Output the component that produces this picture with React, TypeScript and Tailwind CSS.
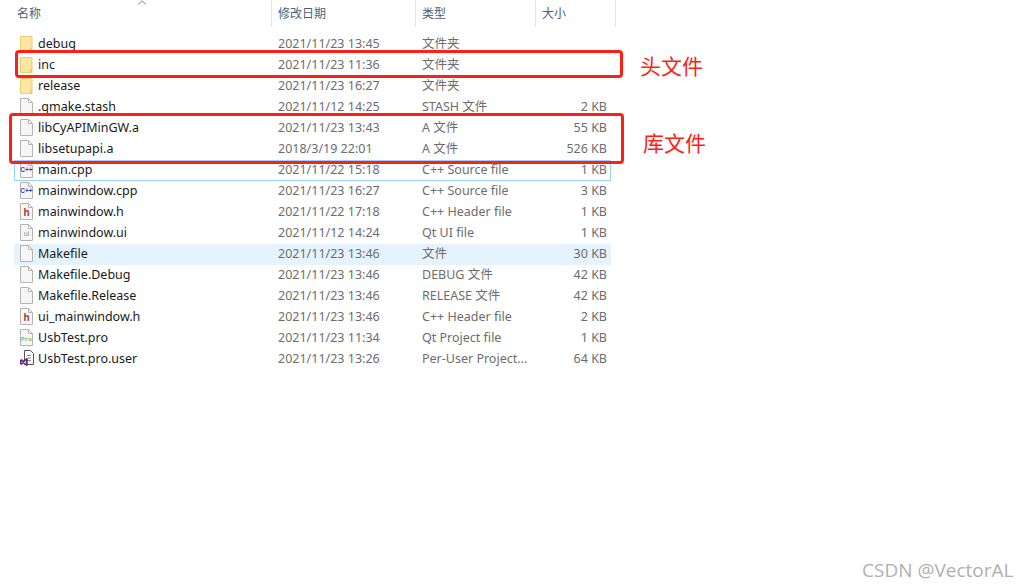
const files = [
  { name: 'debug', date: '2021/11/23 13:45', type: '文件夹', size: '', icon: 'folder' },
  { name: 'inc', date: '2021/11/23 11:36', type: '文件夹', size: '', icon: 'folder' },
  { name: 'release', date: '2021/11/23 16:27', type: '文件夹', size: '', icon: 'folder' },
  { name: '.qmake.stash', date: '2021/11/12 14:25', type: 'STASH 文件', size: '2 KB', icon: 'doc' },
  { name: 'libCyAPIMinGW.a', date: '2021/11/23 13:43', type: 'A 文件', size: '55 KB', icon: 'doc' },
  { name: 'libsetupapi.a', date: '2018/3/19 22:01', type: 'A 文件', size: '526 KB', icon: 'doc' },
  { name: 'main.cpp', date: '2021/11/22 15:18', type: 'C++ Source file', size: '1 KB', icon: 'cpp' },
  { name: 'mainwindow.cpp', date: '2021/11/23 16:27', type: 'C++ Source file', size: '3 KB', icon: 'cpp' },
  { name: 'mainwindow.h', date: '2021/11/22 17:18', type: 'C++ Header file', size: '1 KB', icon: 'h' },
  { name: 'mainwindow.ui', date: '2021/11/12 14:24', type: 'Qt UI file', size: '1 KB', icon: 'ui' },
  { name: 'Makefile', date: '2021/11/23 13:46', type: '文件', size: '30 KB', icon: 'doc' },
  { name: 'Makefile.Debug', date: '2021/11/23 13:46', type: 'DEBUG 文件', size: '42 KB', icon: 'doc' },
  { name: 'Makefile.Release', date: '2021/11/23 13:46', type: 'RELEASE 文件', size: '42 KB', icon: 'doc' },
  { name: 'ui_mainwindow.h', date: '2021/11/23 13:46', type: 'C++ Header file', size: '2 KB', icon: 'h' },
  { name: 'UsbTest.pro', date: '2021/11/23 11:34', type: 'Qt Project file', size: '1 KB', icon: 'pro' },
  { name: 'UsbTest.pro.user', date: '2021/11/23 13:26', type: 'Per-User Project...', size: '64 KB', icon: 'vs' },
]

function FileIcon({ kind }: { kind: string }) {
  if (kind === 'folder') {
    return (
      <svg width="13" height="16" viewBox="0 0 13 16" className="shrink-0 -mt-[2px]">
        <path d="M.5.500h11.500v15H.5z" fill="#fde6a0" stroke="#eccb78" />
        <path d="M10 15.500v-3.500h2v3.500z" fill="#f0c866" />
      </svg>
    )
  }
  if (kind === 'vs') {
    return (
      <svg width="14" height="17" viewBox="0 0 14 17" className="shrink-0 -mt-[2px] -mr-[1px]">
        <path d="M4.500.5h6l3 3v11h-9z" fill="#fff" stroke="#555" />
        <path d="M7 5.500h4M7 8h4M7 10.500h4" stroke="#888" />
        <path d="M0 10l1.500-1 2 1.500 3-2.500 1.200.5v7l-1.200.5-3-2.500-2 1.500-1.500-1z" fill="#68217a" />
        <path d="M1.700 11l1.200 1.200-1.200 1.300zM5.800 10.500v3.500l-1.800-1.700z" fill="#fff" />
      </svg>
    )
  }
  return (
    <svg width="13" height="17" viewBox="0 0 13 17" className="shrink-0 -mt-[2px]">
      <path d="M.5.500h8l4 4v12H.5z" fill="#f6f6f6" stroke="#b4b4b4" />
      <path d="M8.500.5v4h4z" fill="#fff" stroke="#b4b4b4" />
      {kind === 'cpp' && (
        <text x="6.500" y="11" textAnchor="middle" fontSize="6.500" fontWeight="700" fontFamily="Liberation Sans" fill="#4040b0">C++</text>
      )}
      {kind === 'h' && (
        <text x="6.500" y="12.500" textAnchor="middle" fontSize="10" fontWeight="700" fontFamily="Liberation Sans" fill="#a83838">h</text>
      )}
      {kind === 'ui' && (
        <text x="6.500" y="11.500" textAnchor="middle" fontSize="7" fontFamily="Liberation Sans" fill="#5aa0ae">ui</text>
      )}
      {kind === 'pro' && (
        <text x="6.500" y="11.500" textAnchor="middle" fontSize="6" fontWeight="700" fontFamily="Liberation Mono" fill="#7cc04b">Pro</text>
      )}
    </svg>
  )
}

export default function App() {
  return (
    <div className="relative w-[1029px] h-[588px] overflow-hidden bg-white font-['Noto_Sans','Noto_Sans_CJK_SC',sans-serif] text-[12.5px]">
      {/* Column headers */}
      <div className="grid grid-cols-[272px_144px_120px_80px] h-[27px] text-[#4c607a] text-[12px]">
        <div className="relative border-r border-[#e5e5e5] pl-[17px] leading-[27px]">
          名称
          <svg width="10" height="6" viewBox="0 0 10 6" className="absolute left-[137px] top-0">
            <path d="M1 4.500L5 .8l4 3.700" fill="none" stroke="#888" />
          </svg>
        </div>
        <div className="border-r border-[#e5e5e5] pl-[6px] leading-[27px]">修改日期</div>
        <div className="border-r border-[#e5e5e5] pl-[6px] leading-[27px]">类型</div>
        <div className="border-r border-[#e5e5e5] pl-[6px] leading-[27px]">大小</div>
      </div>

      {/* File rows */}
      <div className="mt-[7px] ml-[14px] w-[597px] flex flex-col">
        {files.map(f => (
          <div
            key={f.name}
            className={
              'grid grid-cols-[258px_144px_120px_70px] items-center h-[21px] border ' +
              (f.name === 'main.cpp'
                ? 'border-[#99d1ff]'
                : f.name === 'Makefile'
                  ? 'bg-[#e5f3ff] border-[#e5f3ff]'
                  : 'border-transparent')
            }
          >
            <div className="flex items-center gap-[5px] pl-[5px] text-[#1a1a1a] whitespace-nowrap">
              <FileIcon kind={f.icon} />
              <span>{f.name}</span>
            </div>
            <div className="pl-[5px] text-[#6d6d6d] whitespace-nowrap">{f.date}</div>
            <div className="pl-[5px] text-[#6d6d6d] whitespace-nowrap">{f.type}</div>
            <div className="text-right text-[#6d6d6d] whitespace-nowrap">{f.size}</div>
          </div>
        ))}
      </div>

      {/* Red annotations over the list */}
      <div className="absolute left-[15px] top-[50px] w-[608px] h-[28px] border-[3px] border-[#ff2015] rounded-[4px]" />
      <div className="absolute left-[9px] top-[113px] w-[615px] h-[51px] border-[3px] border-[#ff2015] rounded-[4px]" />
      <div className="absolute left-[640px] top-[51px] text-[21px] leading-[30px] text-[#ff2015]">头文件</div>
      <div className="absolute left-[643px] top-[128px] text-[21px] leading-[30px] text-[#ff2015]">库文件</div>

      {/* Watermark */}
      <div className="absolute left-[862px] top-[556px] text-[19px] leading-[28px] text-[#b0b0b0] font-['Open_Sans',sans-serif]">CSDN @VectorAL</div>
    </div>
  )
}
